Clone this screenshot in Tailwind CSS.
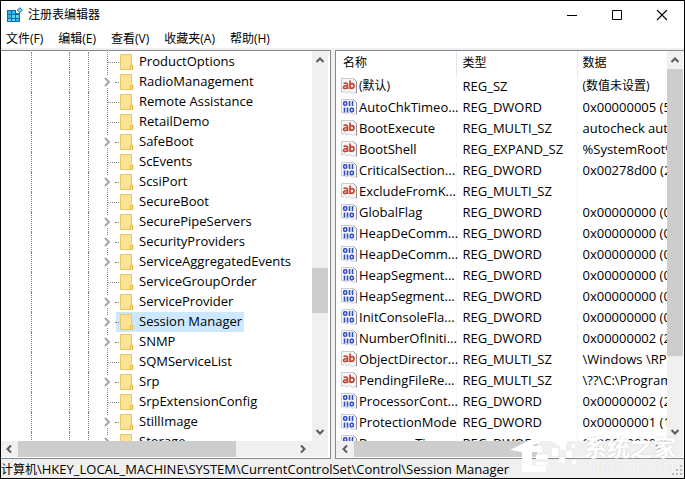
<!DOCTYPE html>
<html lang="zh-CN">
<head>
    <meta charset="UTF-8">
    <meta name="viewport" content="width=device-width, initial-scale=1.0">
    <title>注册表编辑器</title>
    <script src="https://cdn.jsdelivr.net/npm/@tailwindcss/browser@4"></script>
</head>
<body class="h-screen overflow-hidden bg-black p-px font-['Open_Sans','Noto_Sans_CJK_SC',sans-serif] text-[13px] text-black">
    <!-- Shared icons -->
    <svg class="hidden">
        <symbol id="folder" viewBox="0 0 14 16">
            <path d="M.5.5h11v10l1.500 1v4H.5z" fill="#ffe394" stroke="#e9c766"/>
            <path d="M10.500 15.500v-4h2v4z" fill="#ffe9a6" stroke="#e5bb4c"/>
        </symbol>
        <symbol id="page" viewBox="0 0 16 16">
            <path d="M.5.5h12l3 3v12l-2-1-2 1-3-2-3 1.500-2-1.500-3 .5z" fill="#f7f7fa" stroke="#c9ccd2"/>
            <path d="M12.500.5l3 3v11.500" fill="none" stroke="#8d9096"/>
        </symbol>
        <symbol id="bin" viewBox="0 0 16 16">
            <use href="#page"/>
            <g fill="none" stroke="#2f4fc4" stroke-width="1.600">
                <rect x="2.700" y="2.700" width="3" height="3.500" rx="1"/>
                <path d="M8.500 2v5M11.500 2v5M3.500 8.500v5M6.500 8.500v5"/>
                <rect x="9.300" y="9.200" width="3" height="3.500" rx="1"/>
            </g>
        </symbol>
        <symbol id="str" viewBox="0 0 16 16">
            <use href="#page"/>
            <g fill="none" stroke="#c8442c" stroke-width="1.700">
                <path d="M2.500 5.500c3-1 4 0 4 1.500v4M6.500 7.800c-2.500-.2-4 .4-4 1.600 0 1.800 3 1.600 4-.2"/>
                <path d="M9 2.500v8.500M9 7c.5-2 4-2 4 .8 0 3-3.500 3.200-4 1"/>
            </g>
        </symbol>
        <symbol id="arrow" viewBox="0 0 10 10">
            <path d="M1.500 7L5 3.500 8.500 7" fill="none" stroke="#5a5a5a" stroke-width="2"/>
        </symbol>
    </svg>

    <div class="relative flex h-full flex-col bg-white">
        <header class="flex h-7 shrink-0 items-center pl-[6px]">
            <svg class="h-4 w-4" viewBox="0 0 16 16">
                <path d="M0 3h9v3h4v9H0z" fill="#0f6ea8"/>
                <path d="M1 4h3v3H1zM5 4h3v3H5zM1 8h3v3H1zM9 12h3v2H9z" fill="#35b4e8"/>
                <path d="M5 8h3v3H5zM9 8h3v3H9zM1 12h3v2H1zM5 12h3v2H5z" fill="#5fd0f7"/>
                <path d="M12.800.7l2.500 2.500-2.500 2.500-2.500-2.500z" fill="#7fd6f5" stroke="#1672a8"/>
            </svg>
            <h1 class="ml-[5px] flex-1 text-[12px]">注册表编辑器</h1>
            <button class="flex h-7 w-[45px] items-center justify-center" aria-label="最小化">
                <svg class="h-3 w-3" viewBox="0 0 12 12"><path d="M1 6.500h10" stroke="#000"/></svg>
            </button>
            <button class="flex h-7 w-[45px] items-center justify-center" aria-label="最大化">
                <svg class="h-3 w-3" viewBox="0 0 12 12"><path d="M1.500 1.500h9v9h-9z" fill="none" stroke="#000"/></svg>
            </button>
            <button class="flex h-7 w-[45px] items-center justify-center" aria-label="关闭">
                <svg class="h-3 w-3" viewBox="0 0 12 12"><path d="M1 1l10 10M11 1L1 11" stroke="#000" stroke-width="1.100"/></svg>
            </button>
        </header>

        <nav class="flex h-[21px] shrink-0 items-center gap-[15px] border-b-2 border-[#f0f0f0] pt-px pl-[5px] text-[12px]">
            <button>文件(F)</button>
            <button>编辑(E)</button>
            <button>查看(V)</button>
            <button>收藏夹(A)</button>
            <button>帮助(H)</button>
        </nav>

        <main class="flex min-h-0 flex-1 gap-1 bg-[#f0f0f0]">
            <!-- Key tree -->
            <section class="flex w-[330px] shrink-0 flex-col border-y border-r border-[#828790] bg-white pr-[2px] pb-px">
                <div class="flex min-h-0 flex-1">
                    <ul id="tree" class="min-w-0 flex-1 overflow-hidden pt-px"></ul>
                    <div class="flex w-4 flex-col items-center bg-[#f0f0f0]">
                        <svg class="my-1 h-[10px] w-[10px]"><use href="#arrow"/></svg>
                        <div class="grow-[199] basis-0"></div>
                        <div class="w-full grow-[45] basis-0 bg-[#cdcdcd]"></div>
                        <div class="grow-[110] basis-0"></div>
                        <svg class="my-1 h-[10px] w-[10px] rotate-180"><use href="#arrow"/></svg>
                    </div>
                </div>
                <div class="flex h-4 shrink-0 items-center bg-[#f0f0f0]">
                    <svg class="mr-1 ml-[3px] h-[10px] w-[10px] -rotate-90"><use href="#arrow"/></svg>
                    <div class="h-full grow-[220] basis-0 bg-[#cdcdcd]"></div>
                    <div class="grow-[58] basis-0"></div>
                    <svg class="mr-5 ml-1 h-[10px] w-[10px] rotate-90"><use href="#arrow"/></svg>
                </div>
            </section>

            <!-- Values of the selected key -->
            <section class="flex min-w-0 flex-1 flex-col border-y border-l border-[#828790] bg-white pr-px pb-px">
                <div class="flex min-h-0 flex-1">
                    <div class="min-w-0 flex-1 overflow-hidden">
                        <table class="w-full table-fixed whitespace-nowrap text-left">
                            <thead class="text-[12px]">
                                <tr class="h-6">
                                    <th class="w-[120px] border-r border-[#e2e6ee] pl-[7px] font-normal">名称</th>
                                    <th class="w-[121px] border-r border-[#e2e6ee] pl-[6px] font-normal">类型</th>
                                    <th class="pl-[5px] font-normal">数据</th>
                                </tr>
                            </thead>
                            <tbody id="values"></tbody>
                        </table>
                    </div>
                    <div class="flex w-4 flex-col items-center bg-[#f0f0f0]">
                        <svg class="my-1 h-[10px] w-[10px]"><use href="#arrow"/></svg>
                        <div class="w-full grow-[287] basis-0 bg-[#cdcdcd]"></div>
                        <div class="grow-[67] basis-0"></div>
                        <svg class="my-1 h-[10px] w-[10px] rotate-180"><use href="#arrow"/></svg>
                    </div>
                </div>
                <div class="flex h-4 shrink-0 items-center bg-[#f0f0f0]">
                    <svg class="mr-1 ml-1 h-[10px] w-[10px] -rotate-90"><use href="#arrow"/></svg>
                    <div class="h-full grow-[184] basis-0 bg-[#cdcdcd]"></div>
                    <div class="grow-[112] basis-0"></div>
                    <svg class="mr-5 ml-1 h-[10px] w-[10px] rotate-90"><use href="#arrow"/></svg>
                </div>
            </section>
        </main>

        <footer class="flex h-[19px] shrink-0 items-center justify-between bg-[#f0f0f0] pt-[3px] whitespace-nowrap">
            <p><span class="text-[12px]">计算机</span>\HKEY_LOCAL_MACHINE\SYSTEM\CurrentControlSet\Control\Session Manager</p>
            <svg class="h-3 w-3" viewBox="0 0 12 12"><path d="M8 1h2v2H8zM8 5h2v2H8zM4 5h2v2H4zM8 9h2v2H8zM4 9h2v2H4zM0 9h2v2H0z" fill="#b8b8b8"/></svg>
        </footer>

        <!-- Watermark -->
        <div class="absolute right-2 bottom-1 flex items-end gap-1 text-white">
            <svg class="h-11 w-[70px]" viewBox="0 0 70 44" fill="#fff">
                <path d="M0 20L20 10 36 3c8 0 14 6 22 9l-6 5-16-9-14 8h10v6H22v14h14v6H12V22z"/>
                <path d="M26 25h12v4H26zM26 32h12v3H26zM42 18h6v8h-6zM50 14h6v6h-6zM56 21h6v6h-6zM49 27h6v6h-6zM62 14h3v4h-3zM62 30h4v4h-4z"/>
            </svg>
            <div class="flex flex-col items-center">
                <span class="text-[23px] leading-[26px] font-bold [text-shadow:0_0_2px_#ccc]">系统之家</span>
                <span class="font-['Liberation_Serif',serif] text-[10px] leading-[14px] [text-shadow:0_0_1px_#ccc]">XITONGZHIJIA.NET</span>
            </div>
        </div>
    </div>

    <script>
        // Tree keys: [name, has children]
        const keys = [
            ['ProductOptions', false],
            ['RadioManagement', true],
            ['Remote Assistance', false],
            ['RetailDemo', false],
            ['SafeBoot', true],
            ['ScEvents', false],
            ['ScsiPort', true],
            ['SecureBoot', false],
            ['SecurePipeServers', true],
            ['SecurityProviders', true],
            ['ServiceAggregatedEvents', true],
            ['ServiceGroupOrder', false],
            ['ServiceProvider', true],
            ['Session Manager', true],
            ['SNMP', true],
            ['SQMServiceList', false],
            ['Srp', true],
            ['SrpExtensionConfig', false],
            ['StillImage', true],
            ['Storage', true]
        ];
        const selected = 'Session Manager';

        const values = [
            ['(默认)', 'REG_SZ', '(数值未设置)'],
            ['AutoChkTimeo...', 'REG_DWORD', '0x00000005 (5)'],
            ['BootExecute', 'REG_MULTI_SZ', 'autocheck autochk *'],
            ['BootShell', 'REG_EXPAND_SZ', '%SystemRoot%\\system32'],
            ['CriticalSection...', 'REG_DWORD', '0x00278d00 (2592000)'],
            ['ExcludeFromK...', 'REG_MULTI_SZ', ''],
            ['GlobalFlag', 'REG_DWORD', '0x00000000 (0)'],
            ['HeapDeComm...', 'REG_DWORD', '0x00000000 (0)'],
            ['HeapDeComm...', 'REG_DWORD', '0x00000000 (0)'],
            ['HeapSegment...', 'REG_DWORD', '0x00000000 (0)'],
            ['HeapSegment...', 'REG_DWORD', '0x00000000 (0)'],
            ['InitConsoleFla...', 'REG_DWORD', '0x00000000 (0)'],
            ['NumberOfIniti...', 'REG_DWORD', '0x00000002 (2)'],
            ['ObjectDirector...', 'REG_MULTI_SZ', '\\Windows \\RPC Control'],
            ['PendingFileRe...', 'REG_MULTI_SZ', '\\??\\C:\\Program Files'],
            ['ProcessorCont...', 'REG_DWORD', '0x00000002 (2)'],
            ['ProtectionMode', 'REG_DWORD', '0x00000001 (1)'],
            ['ResourceTimeo...', 'REG_DWORD', '0x00000000 (0)']
        ];

        // Connector left of each key: chevron for parents, dotted branch for leaves
        const parentMark = `
            <path d="M10.500 0v4M10.500 16v4M18 10.500h1" stroke="#808080" stroke-dasharray="1 1"/>
            <path d="M8 6l4 4-4 4" fill="none" stroke="#a6a6a6" stroke-width="2"/>`;
        const leafMark = `<path d="M10.500 0v20M11 10.500h8" stroke="#808080" stroke-dasharray="1 1"/>`;

        document.getElementById('tree').innerHTML = keys.map(([name, parent]) => `
            <li class="flex h-5 pl-[30px]">
                <span class="w-[38px] shrink-0 border-l border-dotted border-[#808080]"></span>
                <span class="w-[19px] shrink-0 border-l border-dotted border-[#808080]"></span>
                <span class="w-[9px] shrink-0 border-l border-dotted border-[#808080]"></span>
                <svg class="h-5 w-[19px] shrink-0" viewBox="0 0 19 20">${parent ? parentMark : leafMark}</svg>
                <div class="flex items-center pr-[2px] whitespace-nowrap ${name === selected ? 'bg-[#cce8ff]' : ''}">
                    <span class="mr-px w-[3px] border-t border-dotted border-[#808080]"></span>
                    <svg class="mr-[5px] h-4 w-[14px]"><use href="#folder"/></svg>
                    <span>${name}</span>
                </div>
            </li>`).join('');

        document.getElementById('values').innerHTML = values.map(([name, type, data]) => {
            const size = name.startsWith('(') ? 'text-[12px]' : '';
            return `
            <tr class="h-[21px] leading-5">
                <td class="border-r border-[#f4f5f8] pl-[5px]">
                    <div class="flex items-center gap-[2px]">
                        <svg class="h-4 w-4 shrink-0"><use href="${type === 'REG_DWORD' ? '#bin' : '#str'}"/></svg>
                        <span class="${size}">${name}</span>
                    </div>
                </td>
                <td class="border-r border-[#f4f5f8] pl-[6px]">${type}</td>
                <td class="pl-[5px] ${size}">${data}</td>
            </tr>`;
        }).join('');
    </script>
</body>
</html>
